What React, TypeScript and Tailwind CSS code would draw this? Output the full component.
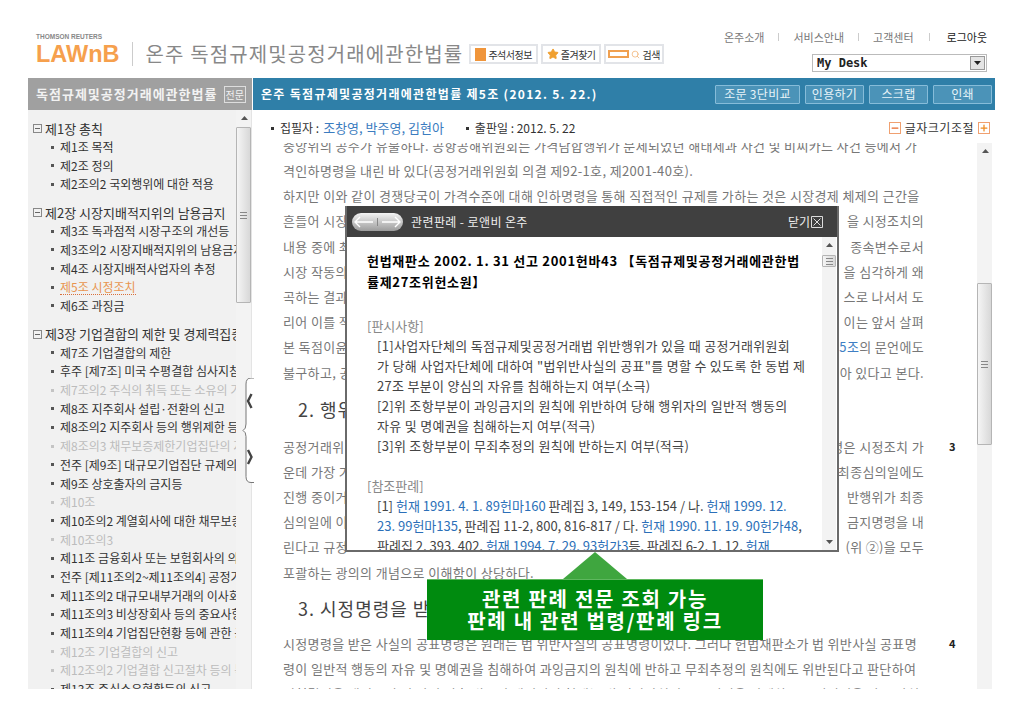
import { Minus, Plus, Search, Star } from "lucide-react";
import type { ReactNode } from "react";

type TocItem = { label: string; dim?: boolean; active?: boolean };
type Chapter = { title: string; items: TocItem[] };

const chapters: Chapter[] = [
  {
    title: "제1장 총칙",
    items: [{ label: "제1조 목적" }, { label: "제2조 정의" }, { label: "제2조의2 국외행위에 대한 적용" }],
  },
  {
    title: "제2장 시장지배적지위의 남용금지",
    items: [
      { label: "제3조 독과점적 시장구조의 개선등" },
      { label: "제3조의2 시장지배적지위의 남용금지" },
      { label: "제4조 시장지배적사업자의 추정" },
      { label: "제5조 시정조치", active: true },
      { label: "제6조 과징금" },
    ],
  },
  {
    title: "제3장 기업결합의 제한 및 경제력집중",
    items: [
      { label: "제7조 기업결합의 제한" },
      { label: "후주 [제7조] 미국 수평결합 심사지침" },
      { label: "제7조의2 주식의 취득 또는 소유의 기준", dim: true },
      { label: "제8조 지주회사 설립·전환의 신고" },
      { label: "제8조의2 지주회사 등의 행위제한 등" },
      { label: "제8조의3 채무보증제한기업집단의 지주회사", dim: true },
      { label: "전주 [제9조] 대규모기업집단 규제의" },
      { label: "제9조 상호출자의 금지등" },
      { label: "제10조", dim: true },
      { label: "제10조의2 계열회사에 대한 채무보증의" },
      { label: "제10조의3", dim: true },
      { label: "제11조 금융회사 또는 보험회사의 의결권" },
      { label: "전주 [제11조의2~제11조의4] 공정거래" },
      { label: "제11조의2 대규모내부거래의 이사회" },
      { label: "제11조의3 비상장회사 등의 중요사항" },
      { label: "제11조의4 기업집단현황 등에 관한 공시" },
      { label: "제12조 기업결합의 신고", dim: true },
      { label: "제12조의2 기업결합 신고절차 등의 특례", dim: true },
      { label: "제13조 주식소유현황등의 신고" },
    ],
  },
];

const font = "font-['Noto_Sans_CJK_KR','Liberation_Sans',sans-serif]";

function Scrollbar({ className, thumb, down = true }: { className: string; thumb: string; down?: boolean }) {
  return (
    <div className={`relative shrink-0 bg-[#f3f3f3] ${className}`}>
      <svg className="absolute left-1/2 top-[6px] -ml-[3px]" width="7" height="4">
        <path d="M3.5 0 7 4H0z" fill="#555" />
      </svg>
      <div className={`absolute inset-x-0 flex items-center justify-center rounded-[1px] border border-[#b5b5b5] bg-gradient-to-r from-[#f5f5f5] to-[#d8d8d8] ${thumb}`}>
        <div className="h-[7px] w-[7px] border-y border-[#888] bg-[linear-gradient(#888,#888)] bg-[length:100%_1px] bg-center bg-no-repeat" />
      </div>
      {down && (
        <svg className="absolute bottom-[6px] left-1/2 -ml-[3px]" width="7" height="4">
          <path d="M0 0h7L3.5 4z" fill="#555" />
        </svg>
      )}
    </div>
  );
}

function Sidebar() {
  return (
    <aside className="flex w-[224px] shrink-0 overflow-hidden border-r border-[#e4e4e4] bg-[#f1f1f1]">
      <div className="w-[208px] shrink-0 overflow-hidden pl-[5px] pt-[9px] text-[12px] text-[#333]">
        {chapters.map((c) => (
          <div key={c.title} className="mb-[9.4px]">
            <div className="flex h-[18.7px] items-center whitespace-nowrap text-[13px]">
              <span className="mr-[3px] flex h-[9px] w-[9px] shrink-0 items-center justify-center border border-[#888]">
                <span className="h-px w-[5px] bg-[#666]" />
              </span>
              {c.title}
            </div>
            {c.items.map((item) => (
              <div
                key={item.label}
                className={`flex h-[18.7px] items-center whitespace-nowrap pl-[18px] ${item.dim ? "text-[#bcbcbc]" : item.active ? "text-[#e8954f]" : ""}`}
              >
                <span className={`mr-[6px] h-[3px] w-[3px] shrink-0 ${item.dim ? "bg-[#c4c4c4]" : "bg-[#555]"}`} />
                <span className={item.active ? "border-b border-dotted border-[#d9703a] leading-[15px]" : ""}>{item.label}</span>
              </div>
            ))}
          </div>
        ))}
      </div>
      <Scrollbar className="w-[15px]" thumb="top-[17px] h-[176px]" down={false} />
    </aside>
  );
}

// 가려진 줄은 왼쪽, 오른쪽 조각만 양 끝에 붙인다
function Line({ left, right, page }: { left: ReactNode; right?: ReactNode; page?: string }) {
  return (
    <div className="flex h-[25.2px] items-center whitespace-nowrap">
      <div className="flex w-[641px] shrink-0 justify-between">
        <span>{left}</span>
        {right && <span>{right}</span>}
      </div>
      {page && <span className="ml-[25px] text-[11px] font-bold text-[#222]">{page}</span>}
    </div>
  );
}

function Article() {
  return (
    <div className="min-w-0 flex-1 overflow-hidden pl-[31px] text-[13px] tracking-[0.35px] text-[#777]">
      <div className="-mt-[10px]">
        <Line left="중앙위의 공주가 유불하다. 공항공해위원회는 가격담합행위가 문제되었던 해태제과 사건 및 비씨카드 사건 등에서 가" />
        <Line left="격인하명령을 내린 바 있다(공정거래위원회 의결 제92-1호, 제2001-40호)." />
        <Line left="하지만 이와 같이 경쟁당국이 가격수준에 대해 인하명령을 통해 직접적인 규제를 가하는 것은 시장경제 체제의 근간을" />
        <Line left="흔들어 시장" right="을 시정조치의" />
        <Line left="내용 중에 최" right="종속변수로서" />
        <Line left="시장 작동의" right="을 심각하게 왜" />
        <Line left="곡하는 결과" right="스로 나서서 도" />
        <Line left="리어 이를 적" right="이는 앞서 살펴" />
        <Line left="본 독점이윤" right={<><span className="text-[#3f7fc4]">5조</span>의 문언에도</>} />
        <Line left="불구하고, 공" right="아 있다고 본다." />
        <div className="flex h-[49px] items-center pl-[15px] text-[18px] tracking-[1px] text-[#444]">2. 행위</div>
        <Line left="공정거래위" right="명은 시정조치 가" page="3" />
        <Line left="운데 가장 기" right="최종심의일에도" />
        <Line left="진행 중이거" right="반행위가 최종" />
        <Line left="심의일에 이" right="금지명령을 내" />
        <Line left="린다고 규정" right="(위 ②)을 모두" />
        <Line left="포괄하는 광의의 개념으로 이해함이 상당하다." />
        <div className="flex h-[46px] items-center pl-[15px] text-[18px] tracking-[1px] text-[#444]">3. 시정명령을 받</div>
        <Line left="시정명령을 받은 사실의 공표명령은 원래는 법 위반사실의 공표명령이었다. 그러나 헌법재판소가 법 위반사실 공표명" page="4" />
        <Line left="령이 일반적 행동의 자유 및 명예권을 침해하여 과잉금지의 원칙에 반하고 무죄추정의 원칙에도 위반된다고 판단하여" />
        <Line left="위헌결정을 내렸으며 이 사건 이후 법률이 개정되어 현재는 법 위반사실의 공표명령을 삭제하고 시정명령을 받은 사실" />
      </div>
    </div>
  );
}

function CaseModal() {
  const link = "text-[#2b6fb8]";
  return (
    <div className="absolute left-[93px] top-[96px] z-10 flex h-[346px] w-[494px] flex-col overflow-hidden border-2 border-t-0 border-[#6a6a6a] bg-white">
      <div className="flex h-[31px] shrink-0 items-center bg-[#404040] pl-[5px] pr-[14px] text-[12px] text-[#eee]">
        <div className="flex h-[18px] w-[51px] items-center justify-center gap-[2px] rounded-full bg-gradient-to-b from-[#f4f4f4] to-[#9c9c9c]">
          <svg width="22" height="12" viewBox="0 0 22 12" fill="none" stroke="#fff" strokeWidth="1.4">
            <path d="M7 1 2 6l5 5M2 6h18" />
          </svg>
          <span className="h-[8px] w-px bg-[#888]" />
          <svg width="22" height="12" viewBox="0 0 22 12" fill="none" stroke="#fff" strokeWidth="1.4">
            <path d="M15 1l5 5-5 5M20 6H2" />
          </svg>
        </div>
        <span className="ml-[8px] flex-1 tracking-[0.4px]">관련판례 - 로앤비 온주</span>
        <span>닫기</span>
        <svg className="ml-px" width="12" height="12" viewBox="0 0 12 12" fill="none" stroke="#ddd">
          <path d="M.5.5h11v11H.5zM2.5 2.5l7 7M9.5 2.5l-7 7" />
        </svg>
      </div>
      <div className="flex min-h-0 flex-1">
        <div className="min-w-0 flex-1 overflow-hidden pl-[20px] pt-[13px] text-[13px] leading-[20px] text-[#444]">
          <div className="whitespace-nowrap font-bold leading-[21px] tracking-[0.7px] text-black">
            헌법재판소 2002. 1. 31 선고 2001헌바43 【독점규제및공정거래에관한법
            <br />
            률제27조위헌소원】
          </div>
          <div className="mt-[24px] text-[#888]">[판시사항]</div>
          <div className="whitespace-nowrap pl-[10px] tracking-[0.3px]">
            <div>[1]사업자단체의 독점규제및공정거래법 위반행위가 있을 때 공정거래위원회</div>
            <div>가 당해 사업자단체에 대하여 "법위반사실의 공표"를 명할 수 있도록 한 동법 제</div>
            <div>27조 부분이 양심의 자유를 침해하는지 여부(소극)</div>
            <div>[2]위 조항부분이 과잉금지의 원칙에 위반하여 당해 행위자의 일반적 행동의</div>
            <div>자유 및 명예권을 침해하는지 여부(적극)</div>
            <div>[3]위 조항부분이 무죄추정의 원칙에 반하는지 여부(적극)</div>
          </div>
          <div className="mt-[20px] text-[#888]">[참조판례]</div>
          <div className="whitespace-nowrap pl-[10px]">
            <div>
              [1] <span className={link}>헌재 1991. 4. 1. 89헌마160</span> 판례집 3, 149, 153-154 / 나. <span className={link}>헌재 1999. 12.</span>
            </div>
            <div>
              <span className={link}>23. 99헌마135</span>, 판례집 11-2, 800, 816-817 / 다. <span className={link}>헌재 1990. 11. 19. 90헌가48</span>,
            </div>
            <div>
              판례집 2, 393, 402, <span className={link}>헌재 1994. 7. 29. 93헌가3</span>등, 판례집 6-2, 1, 12, <span className={link}>헌재</span>
            </div>
          </div>
        </div>
        <Scrollbar className="mr-[1px] w-[14px]" thumb="top-[18px] h-[12px]" />
      </div>
    </div>
  );
}

function Callout() {
  return (
    <div className="absolute left-[175px] top-[442px] z-20 w-[336px]">
      <svg className="ml-[136px] block" width="64" height="27" viewBox="0 0 64 27">
        <path d="M32 0 64 27H0z" fill="#3fa63f" />
      </svg>
      <div className="flex h-[61px] flex-col items-center justify-center border-t border-[#5fb85f] bg-[#008b0f] text-[20px] font-bold leading-[22px] tracking-[1.7px] text-white">
        <div>관련 판례 전문 조회 가능</div>
        <div>판례 내 관련 법령/판례 링크</div>
      </div>
    </div>
  );
}

function PanelTabs() {
  return (
    <svg className="absolute left-[214px] top-[268px] z-10" width="12" height="106" viewBox="0 0 12 106">
      <path d="M12 0H9Q4 0 4 6v40q0 5-3 6.500q3 1.500 3 6v40q0 6 5 6h3" fill="#fff" stroke="#777" />
      <path d="M9.500 16 6 23l3.500 7" fill="none" stroke="#444" strokeWidth="2.400" />
      <path d="M6 72l3.500 7L6 86" fill="none" stroke="#444" strokeWidth="2.400" />
    </svg>
  );
}

function Header() {
  const tool = "flex h-[20px] items-center justify-center gap-[2px] border-2 border-[#e2e4e8] bg-white text-[10px] tracking-[-0.5px] text-[#333]";
  return (
    <header className="flex h-[78px] shrink-0">
      <div className="pl-[8px] pt-[33px]">
        <div className="font-['Liberation_Sans',sans-serif] text-[6.500px] font-bold leading-[8px] text-[#888]">THOMSON REUTERS</div>
        <div className="flex items-center">
          <span className="font-['Liberation_Sans',sans-serif] text-[23.500px] font-bold leading-[26px] text-[#f6a04d]">LAWnB</span>
          <span className="ml-[12px] h-[24px] w-px bg-[#ccc]" />
          <span className="ml-[13px] whitespace-nowrap text-[20px] leading-[26px] tracking-[1.1px] text-[#888]">온주 독점규제및공정거래에관한법률</span>
          <div className="ml-[6px] flex gap-[3px]">
            <div className={`${tool} w-[69px]`}>
              <span className="h-[13px] w-[11px] bg-[#f0953a]" />
              주석서정보
            </div>
            <div className={`${tool} w-[60px]`}>
              <Star size={12} fill="#f0a030" stroke="#f0a030" />
              즐겨찾기
            </div>
            <div className={`${tool} w-[60px]`}>
              <span className="h-[8px] w-[21px] border-2 border-[#f0a050]" />
              <Search size={9} className="text-[#f0b070]" />
              검색
            </div>
          </div>
        </div>
      </div>
      <div className="ml-auto flex flex-col items-end pr-[8px] pt-[30px]">
        <nav className="flex items-center whitespace-nowrap text-[11px] leading-[14px] text-[#777]">
          <span>온주소개</span>
          <span className="mx-[14px] h-[8px] w-px bg-[#ccc]" />
          <span>서비스안내</span>
          <span className="mx-[14px] h-[8px] w-px bg-[#ccc]" />
          <span>고객센터</span>
          <span className="ml-[15px] mr-[17px] h-[8px] w-px bg-[#ccc]" />
          <span className="text-[#222]">로그아웃</span>
        </nav>
        <div className="mt-[10px] flex h-[18px] w-[175px] shrink-0 items-center border border-[#bbb] pl-[4px] pr-px font-['DejaVu_Sans_Mono',monospace] text-[12px] font-bold text-[#222]">
          <span className="flex-1">My Desk</span>
          <span className="flex h-[14px] w-[15px] items-center justify-center border border-[#999] bg-[#e4e4e4]">
            <svg width="7" height="4">
              <path d="M0 0h7L3.500 4z" fill="#222" />
            </svg>
          </span>
        </div>
      </div>
    </header>
  );
}

function TitleBars() {
  const btn = "flex h-[19px] items-center justify-center rounded-[1px] border border-[#86bcd9] bg-[#4b93b8] text-[12px] tracking-[0.3px] text-[#e8f3f8]";
  return (
    <div className="flex h-[32px] shrink-0">
      <div className="flex w-[224px] shrink-0 items-center justify-between bg-[#a0a0a0] pl-[8px] pr-[6px] text-[13px] font-bold tracking-[1px] text-[#f2f2f2]">
        <span className="whitespace-nowrap">독점규제및공정거래에관한법률</span>
        <span className="border border-[#ddd] px-[1px] text-[10px] font-normal leading-[15px] tracking-normal">전문</span>
      </div>
      <div className="ml-px flex flex-1 items-center bg-[#2f7fa8] pl-[8px] pr-[3px] text-[12px] font-bold tracking-[1.3px] text-white">
        <span className="flex-1 whitespace-nowrap">온주 독점규제및공정거래에관한법률 제5조 (2012. 5. 22.)</span>
        <div className="flex gap-[5px] font-normal">
          <span className={`${btn} w-[85px]`}>조문 3단비교</span>
          <span className={`${btn} w-[59px]`}>인용하기</span>
          <span className={`${btn} w-[59px]`}>스크랩</span>
          <span className={`${btn} w-[59px]`}>인쇄</span>
        </div>
      </div>
    </div>
  );
}

export default function App() {
  return (
    <div className={`ml-[28px] flex h-[717px] w-[967px] flex-col overflow-hidden bg-white ${font}`}>
      <Header />
      <TitleBars />
      <div className="relative flex h-[579px] shrink-0">
        <Sidebar />
        <main className="relative flex min-w-0 flex-1 flex-col">
          <div className="flex h-[33px] shrink-0 items-center whitespace-nowrap pb-[3px] pl-[19px] pr-[5px] pt-[6px] text-[12px] text-[#333]">
            <span className="mr-[6px] h-[3px] w-[3px] bg-[#333]" />
            집필자 : <span className="ml-1 text-[13px] text-[#3b7cc0]">조창영, 박주영, 김현아</span>
            <span className="ml-[22px] mr-[6px] h-[3px] w-[3px] bg-[#333]" />
            출판일 : 2012. 5. 22
            <span className="ml-auto flex h-[12px] w-[12px] items-center justify-center border border-[#f0a070] text-[#e8682a]">
              <Minus size={10} strokeWidth={3} />
            </span>
            <span className="mx-[4px] tracking-[0.5px]">글자크기조절</span>
            <span className="flex h-[12px] w-[12px] items-center justify-center border border-[#f0a070] text-[#ee8a20]">
              <Plus size={10} strokeWidth={3} />
            </span>
          </div>
          <div className="flex min-h-0 flex-1 pr-[3px]">
            <Article />
            <Scrollbar className="w-[15px]" thumb="top-[140px] h-[162px]" down={false} />
          </div>
          <CaseModal />
          <Callout />
        </main>
        <PanelTabs />
      </div>
    </div>
  );
}
